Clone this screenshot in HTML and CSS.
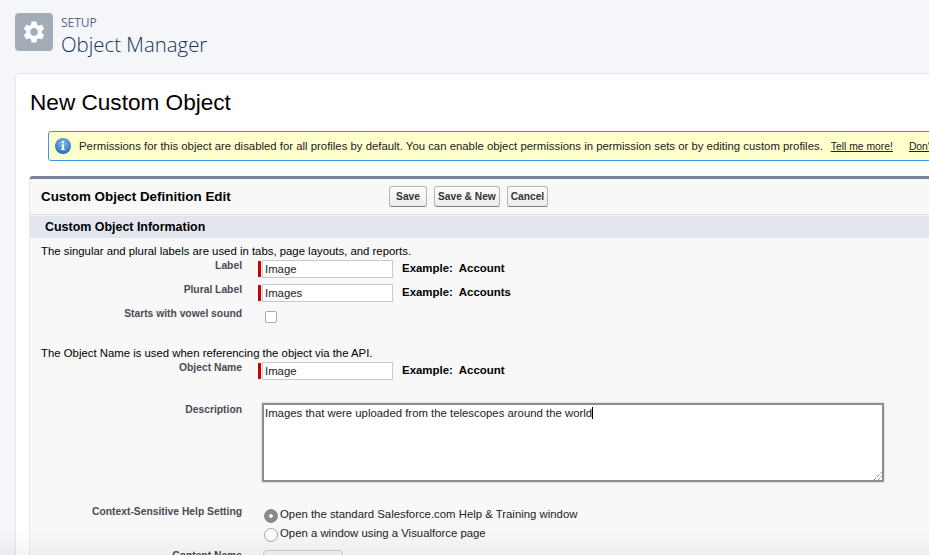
FILE: index.html

```html
<!DOCTYPE html>
<html lang="en">
<head>
  <meta charset="UTF-8" />
  <meta name="viewport" content="width=device-width, initial-scale=1.0" />
  <title>New Custom Object</title>
  <link rel="stylesheet" href="styles.css">
</head>
<body>
  <header class="setup-head">
    <div class="setup-icon">
      <svg viewBox="0 0 24 24" width="26" height="26"><path fill="#fff" d="M19.14 12.94c.04-.3.06-.61.06-.94 0-.32-.02-.64-.07-.94l2.03-1.58a.49.49 0 0 0 .12-.61l-1.92-3.32a.488.488 0 0 0-.59-.22l-2.39.96c-.5-.38-1.03-.7-1.62-.94l-.36-2.54a.484.484 0 0 0-.48-.41h-3.84c-.24 0-.43.17-.47.41l-.36 2.54c-.59.24-1.13.57-1.62.94l-2.39-.96c-.22-.08-.47 0-.59.22L2.74 8.87c-.12.21-.08.47.12.61l2.03 1.58c-.05.3-.09.63-.09.94s.02.64.07.94l-2.03 1.58a.49.49 0 0 0-.12.61l1.92 3.32c.12.22.37.29.59.22l2.39-.96c.5.38 1.03.7 1.62.94l.36 2.54c.05.24.24.41.48.41h3.84c.24 0 .44-.17.47-.41l.36-2.54c.59-.24 1.13-.56 1.62-.94l2.39.96c.22.08.47 0 .59-.22l1.92-3.32c.12-.22.07-.47-.12-.61l-2.01-1.58zM12 15.6c-1.98 0-3.6-1.62-3.6-3.6s1.62-3.6 3.6-3.6 3.6 1.62 3.6 3.6-1.62 3.6-3.6 3.6z"/></svg>
    </div>
    <div class="setup-text">
      <div class="setup-small">SETUP</div>
      <div class="setup-big">Object Manager</div>
    </div>
  </header>

  <main class="card">
    <h1>New Custom Object</h1>

    <div class="alert">
      <svg class="alert-icon" viewBox="0 0 16 16" width="16" height="16">
        <defs>
          <radialGradient id="blueBall" cx="50%" cy="35%" r="65%">
            <stop offset="0" stop-color="#8fc0ee"/>
            <stop offset="1" stop-color="#1f6cc4"/>
          </radialGradient>
        </defs>
        <circle cx="8" cy="8" r="8" fill="url(#blueBall)"/>
        <rect x="7" y="3" width="2" height="2" fill="#fff"/>
        <rect x="7" y="6.5" width="2" height="5" fill="#fff"/>
        <rect x="6" y="11" width="4" height="1" fill="#fff"/>
      </svg>
      <span class="alert-msg">Permissions for this object are disabled for all profiles by default. You can enable object permissions in permission sets or by editing custom profiles.</span>
      <a class="alert-link" href="#">Tell me more!</a>
      <a class="alert-link alert-link-2" href="#">Don't show me this again</a>
    </div>

    <section class="panel">
      <div class="panel-title">
        <h2>Custom Object Definition Edit</h2>
        <div class="btns">
          <button>Save</button>
          <button>Save &amp; New</button>
          <button>Cancel</button>
        </div>
      </div>
      <h3 class="section-head">Custom Object Information</h3>

      <p class="hint">The singular and plural labels are used in tabs, page layouts, and reports.</p>
      <div class="row">
        <label class="lbl">Label</label>
        <div class="req"><input type="text" value="Image"></div>
        <span class="example">Example:&nbsp; Account</span>
      </div>
      <div class="row">
        <label class="lbl">Plural Label</label>
        <div class="req"><input type="text" value="Images"></div>
        <span class="example">Example:&nbsp; Accounts</span>
      </div>
      <div class="row row-check">
        <label class="lbl">Starts with vowel sound</label>
        <span class="check"></span>
      </div>

      <p class="hint hint-api">The Object Name is used when referencing the object via the API.</p>
      <div class="row">
        <label class="lbl">Object Name</label>
        <div class="req"><input type="text" value="Image"></div>
        <span class="example">Example:&nbsp; Account</span>
      </div>

      <div class="row row-desc">
        <label class="lbl">Description</label>
        <div class="desc">Images that were uploaded from the telescopes around the world<span class="caret"></span>
          <svg class="grip" viewBox="0 0 8 8" width="8" height="8"><path d="M0 8L8 0M4 8L8 4" stroke="#555" stroke-width="1" stroke-dasharray="1 1"/></svg>
        </div>
      </div>

      <div class="row row-radio">
        <label class="lbl">Context-Sensitive Help Setting</label>
        <div class="radios">
          <div class="radio-line"><span class="radio radio-on"></span>Open the standard Salesforce.com Help &amp; Training window</div>
          <div class="radio-line"><span class="radio"></span>Open a window using a Visualforce page</div>
        </div>
      </div>
      <div class="row row-content">
        <label class="lbl">Content Name</label>
        <span class="select"></span>
      </div>
    </section>
  </main>
  <div class="bottom-fade"></div>
</body>
</html>
```

FILE: styles.css

```css
html, body {
  height: 555px;
  overflow: hidden;
}
body {
  margin: 0;
  background: #f4f6f9;
  font-family: "Liberation Sans", Arial, sans-serif;
  font-size: 11.36px;
  color: #000;
}

/* top header */
.setup-head {
  display: flex;
  align-items: flex-start;
  padding: 13px 0 0 15px;
  height: 73px;
  box-sizing: border-box;
}
.setup-icon {
  width: 38px;
  height: 38px;
  border-radius: 4px;
  background: #a3adb8;
  display: flex;
  align-items: center;
  justify-content: center;
}
.setup-text {
  margin-left: 8px;
  font-family: "Open Sans", sans-serif;
  color: #16325c;
}
.setup-small {
  font-size: 12px;
  line-height: 16px;
  margin-top: 2px;
  color: #54698d;
}
.setup-big {
  font-size: 20.4px;
  font-weight: 300;
  line-height: 26px;
}

/* white card */
.card {
  width: 1200px;
  margin-left: 15px;
  height: 520px;
  background: #fff;
  border: 1px solid #e4e6ea;
  border-radius: 4px;
  padding: 0 0 0 13px;
  overflow: hidden;
}
h1 {
  margin: 0;
  padding: 15px 0 0 1px;
  font-size: 22.6px;
  font-weight: normal;
  line-height: 28px;
}
.alert {
  display: flex;
  align-items: center;
  margin: 14px 0 0 19px;
  height: 30px;
  box-sizing: border-box;
  background: #ffffcc;
  border: 1px solid #3a94e8;
  border-radius: 3px;
  white-space: nowrap;
  color: #222;
}
.alert-icon {
  margin: 0 8px 0 6px;
}
.alert-link {
  margin-left: 8px;
  font-size: 10.35px;
  color: #222;
}
.alert-link-2 {
  margin-left: 16px;
}

/* form panel */
.panel {
  margin-top: 15px;
  height: 420px;
  background: #f8f8f8;
  border-top: 3px solid #7a8299;
  border-radius: 4px 0 0 0;
  border-left: 1px solid #eaeaea;
}
.panel-title {
  display: flex;
  align-items: center;
  height: 35px;
  border-bottom: 1px solid #dbdbdb;
}
h2 {
  margin: 0;
  width: 359px;
  padding-left: 11px;
  box-sizing: border-box;
  font-size: 13.4px;
  font-weight: bold;
}
.btns {
  display: flex;
  gap: 7px;
}
.btns button {
  height: 21px;
  min-width: 38px;
  padding: 0 3px;
  font: bold 10.2px "Liberation Sans", Arial, sans-serif;
  color: #333;
  background: linear-gradient(#fdfdfd, #ececec);
  border: 1px solid #b5b5b5;
  border-bottom-color: #7f7f7f;
  border-radius: 3px;
}
.section-head {
  margin: 1px 0 0;
  height: 22px;
  line-height: 22px;
  padding-left: 15px;
  background: #e3e6ef;
  font-size: 12.45px;
  font-weight: bold;
}
.hint {
  margin: 0;
  padding: 6px 0 2px 11px;
  line-height: 14px;
}
.hint-api {
  padding-top: 14px;
}
.row {
  display: flex;
  align-items: flex-start;
  height: 18px;
  margin-bottom: 6px;
}
.lbl {
  width: 212px;
  flex: none;
  margin-top: -1px;
  text-align: right;
  font-size: 10.3px;
  font-weight: bold;
  line-height: 14px;
  color: #4a4a56;
}
.req {
  margin-left: 16px;
  padding-left: 1px;
  border-left: 3px solid #c00;
  display: flex;
  height: 16px;
  margin-top: 1px;
  align-items: center;
}
.req input {
  width: 131px;
  height: 18px;
  box-sizing: border-box;
  margin: 0;
  padding: 0 2px;
  border: 1px solid #c9c9c9;
  background: #fff;
  font: 11.36px "Liberation Sans", Arial, sans-serif;
  color: #222;
  outline: none;
}
.example {
  margin-left: 9px;
  font-weight: bold;
  font-size: 11.44px;
  line-height: 16px;
}
.check {
  width: 10px;
  height: 10px;
  margin: 3px 0 0 23px;
  border: 1px solid #a9a9a9;
  border-radius: 2px;
  background: #fff;
}
.row-desc {
  height: 79px;
  margin: 23px 0 0;
}
.row-desc .lbl {
  margin-top: 0;
}
.desc {
  position: relative;
  margin-left: 20px;
  width: 622px;
  height: 79px;
  box-sizing: border-box;
  border: 2px solid #8e8e8e;
  box-shadow: 0 0 2px #bbb;
  background: #fff;
  padding: 1px;
  line-height: 14px;
  color: #222;
}
.caret {
  display: inline-block;
  width: 1px;
  height: 12px;
  background: #000;
  vertical-align: -2px;
}
.grip {
  position: absolute;
  right: 0;
  bottom: 0;
}
.row-radio {
  height: 38px;
  margin: 24px 0 6px;
}
.radios {
  margin: 1px 0 0 22px;
  color: #222;
}
.radio-line {
  display: flex;
  height: 19px;
  line-height: 14px;
}
.radio {
  width: 12px;
  height: 12px;
  flex: none;
  margin: 2px 2px 0 0;
  border: 1px solid #a9a9a9;
  border-radius: 50%;
  background: #fff;
}
.radio-on {
  background: radial-gradient(circle, #fff 0 1.5px, #8a8a8a 2px);
  border-color: #8a8a8a;
}
.select {
  width: 78px;
  height: 16px;
  margin: 0 0 0 21px;
  border: 1px solid #ccc;
  border-radius: 4px;
  background: #f4f4f4;
}
.bottom-fade {
  position: fixed;
  left: 0;
  right: 0;
  bottom: 0;
  height: 30px;
  background: linear-gradient(rgba(0,0,0,0), rgba(0,0,0,.035));
}
```
